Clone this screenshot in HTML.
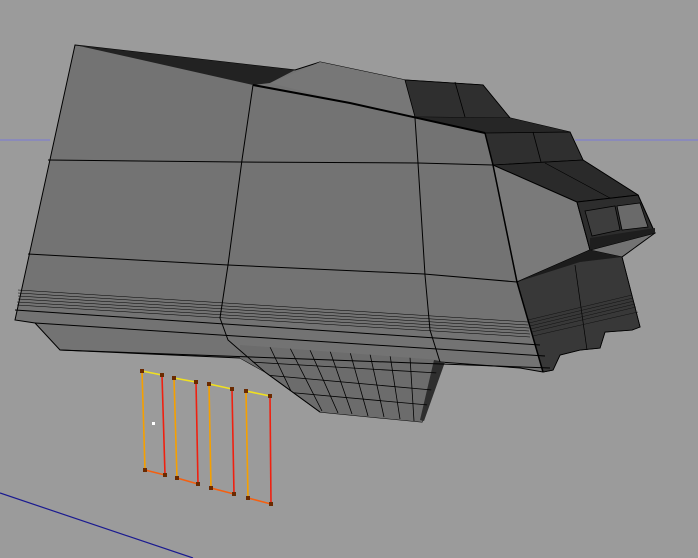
<!DOCTYPE html>
<html><head><style>html,body{margin:0;padding:0;background:#9b9b9b;width:698px;height:558px;overflow:hidden}</style></head>
<body>
<svg width="698" height="558" viewBox="0 0 698 558" xmlns="http://www.w3.org/2000/svg">
<defs><clipPath id="k"><polygon points="240,345 440,360 422,422 320,412 265,372 240,352"/></clipPath></defs>
<rect width="698" height="558" fill="#9b9b9b"/>
<line x1="0" y1="140" x2="50" y2="140" stroke="#7a7ad8" stroke-width="1"/>
<line x1="575" y1="140" x2="698" y2="140" stroke="#7a7ad8" stroke-width="1"/>
<line x1="0" y1="493" x2="193" y2="558" stroke="#1a1a90" stroke-width="1.2"/>

<polygon fill="#737373" stroke="#000" stroke-width="1" points="75,45 295,70 320,62 405,80 483,85 510,118 570,132 583,160 638,195 655,233 622,257 640,327 632,330 605,332 600,348 580,350 560,355 553,370 543,372 520,368 440,362 422,422 320,412 265,372 240,358 60,350 35,323 15,320"/>
<polygon fill="#6c6c6c" points="240,345 440,360 422,422 320,412 265,372 240,358"/>
<polygon fill="#2e2e2e" points="434,360 445,362 424,421 420,420"/>
<polygon fill="#222" points="75,45 295,70 270,83 253,85"/>
<polygon fill="#777" points="270,83 320,62 405,80 415,118 350,103"/>
<polygon fill="#2f2f2f" stroke="#000" stroke-width="0.8" points="405,80 483,85 510,118 415,117"/>
<line x1="455" y1="82" x2="465" y2="117" stroke="#000" stroke-width="0.8"/>
<polygon fill="#262626" points="415,117 510,118 570,132 485,133"/>
<polygon fill="#2f2f2f" stroke="#000" stroke-width="0.8" points="485,133 570,132 583,160 493,165"/>
<line x1="533" y1="132" x2="541" y2="162" stroke="#000" stroke-width="0.8"/>
<polygon fill="#2a2a2a" stroke="#000" stroke-width="0.8" points="493,165 583,160 638,195 577,202"/>
<line x1="545" y1="163" x2="610" y2="198" stroke="#000" stroke-width="0.6"/>
<polygon fill="#7a7a7a" stroke="#000" stroke-width="1" points="493,165 577,202 590,250 517,282"/>
<polygon fill="#2d2d2d" stroke="#000" stroke-width="1" points="577,202 638,195 655,233 590,250"/>
<polygon fill="#3d3d3d" stroke="#000" stroke-width="0.8" points="585,211 615,206 620,230 592,236"/>
<polygon fill="#6a6a6a" stroke="#000" stroke-width="0.8" points="617,206 640,203 648,227 622,230"/>
<polygon fill="#1e1e1e" points="590,238 655,228 655,233 590,250"/>
<polygon fill="#383838" stroke="#000" stroke-width="0.8" points="517,282 590,250 622,257 640,327 632,330 605,332 600,348 580,350 560,355 553,370 543,372"/>
<polygon fill="#1c1c1c" points="517,282 590,250 622,257 580,262"/>
<line x1="575" y1="265" x2="587" y2="350" stroke="#000" stroke-width="0.7"/>
<g stroke="#111" stroke-width="0.5" fill="none">
<path d="M528,320 L632,295 M529,323 L633,298 M530,326 L634,301 M531,329 L635,304 M532,332 L636,307 M533,336 L638,312"/>
</g>

<g stroke="#000" fill="none" stroke-width="1">
<path d="M253,85 L350,103 L485,133" stroke-width="2"/>
<path d="M48,160 L240,162 L418,163 L493,165"/>
<path d="M28,254 L228,265 L424,274 L517,282"/>
<path d="M253,85 L242,160 L228,265 L220,318 L228,340 L265,372 L320,412"/>
<path d="M415,118 L418,163 L425,275 L430,330 L440,362"/>
<path d="M485,133 L493,165 L517,282 L543,372" stroke-width="1.5"/>
<path d="M15,310 L540,345"/>
<path d="M35,323 L545,356"/>
<path d="M60,350 L550,368"/>
</g>
<g stroke="#000" fill="none" stroke-width="0.5">
<path d="M18,290 L528,322 M18,293 L528,325 M18,296 L529,328 M18,299 L529,331 M17,302 L530,334 M17,305 L530,337"/>
</g>
<g stroke="#000" fill="none" stroke-width="0.8" clip-path="url(#k)">
<path d="M270,347 L300,410 M290,348 L322,411 M310,350 L338,413 M330,351 L352,414 M350,352 L368,416 M370,354 L384,417 M390,355 L400,419 M410,357 L414,421"/>
<path d="M250,362 L438,373 M265,375 L432,390 M285,392 L428,405"/>
</g>

<g stroke-width="1.6" fill="none">
<line x1="142" y1="371" x2="162" y2="375" stroke="#f0e020"/>
<line x1="142" y1="371" x2="145" y2="470" stroke="#f5a000"/>
<line x1="162" y1="375" x2="165" y2="475" stroke="#f02010"/>
<line x1="145" y1="470" x2="165" y2="475" stroke="#f56010"/>
<line x1="174" y1="378" x2="196" y2="382" stroke="#f0e020"/>
<line x1="174" y1="378" x2="177" y2="478" stroke="#f5a000"/>
<line x1="196" y1="382" x2="198" y2="484" stroke="#f02010"/>
<line x1="177" y1="478" x2="198" y2="484" stroke="#f56010"/>
<line x1="209" y1="384" x2="232" y2="389" stroke="#f0e020"/>
<line x1="209" y1="384" x2="211" y2="488" stroke="#f5a000"/>
<line x1="232" y1="389" x2="234" y2="494" stroke="#f02010"/>
<line x1="211" y1="488" x2="234" y2="494" stroke="#f56010"/>
<line x1="246" y1="391" x2="270" y2="396" stroke="#f0e020"/>
<line x1="246" y1="391" x2="248" y2="498" stroke="#f5a000"/>
<line x1="270" y1="396" x2="271" y2="504" stroke="#f02010"/>
<line x1="248" y1="498" x2="271" y2="504" stroke="#f56010"/>
</g>
<g fill="#6a2a00">
<rect x="140" y="369" width="4" height="4"/><rect x="160" y="373" width="4" height="4"/><rect x="163" y="473" width="4" height="4"/><rect x="143" y="468" width="4" height="4"/>
<rect x="172" y="376" width="4" height="4"/><rect x="194" y="380" width="4" height="4"/><rect x="196" y="482" width="4" height="4"/><rect x="175" y="476" width="4" height="4"/>
<rect x="207" y="382" width="4" height="4"/><rect x="230" y="387" width="4" height="4"/><rect x="232" y="492" width="4" height="4"/><rect x="209" y="486" width="4" height="4"/>
<rect x="244" y="389" width="4" height="4"/><rect x="268" y="394" width="4" height="4"/><rect x="269" y="502" width="4" height="4"/><rect x="246" y="496" width="4" height="4"/>
</g>
<rect x="152" y="422" width="3" height="3" fill="#fff"/>
</svg>
</body></html>
